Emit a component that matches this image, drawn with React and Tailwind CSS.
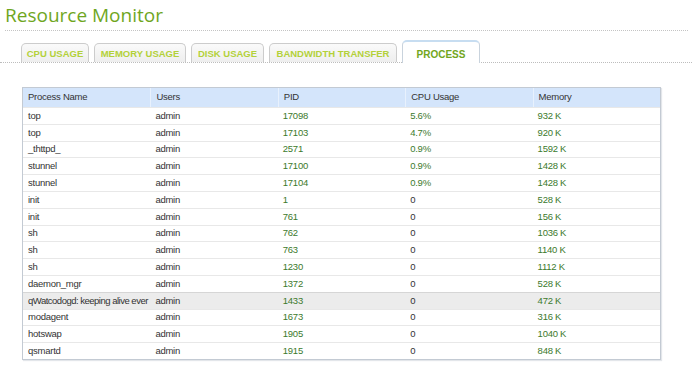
import React from 'react';

const tabs = [
  { label: 'CPU USAGE', w: 'w-[68px]' },
  { label: 'MEMORY USAGE', w: 'w-[92px]' },
  { label: 'DISK USAGE', w: 'w-[73px]' },
  { label: 'BANDWIDTH TRANSFER', w: 'w-[128px]' },
  { label: 'PROCESS', w: 'w-[78px]', active: true },
];

const rows = [
  ['top', '17098', '5.6%', '932 K'],
  ['top', '17103', '4.7%', '920 K'],
  ['_thttpd_', '2571', '0.9%', '1592 K'],
  ['stunnel', '17100', '0.9%', '1428 K'],
  ['stunnel', '17104', '0.9%', '1428 K'],
  ['init', '1', '0', '528 K'],
  ['init', '761', '0', '156 K'],
  ['sh', '762', '0', '1036 K'],
  ['sh', '763', '0', '1140 K'],
  ['sh', '1230', '0', '1112 K'],
  ['daemon_mgr', '1372', '0', '528 K'],
  ['qWatcodogd: keeping alive ever', '1433', '0', '472 K', true],
  ['modagent', '1673', '0', '316 K'],
  ['hotswap', '1905', '0', '1040 K'],
  ['qsmartd', '1915', '0', '848 K'],
];

const headers = ['Process Name', 'Users', 'PID', 'CPU Usage', 'Memory'];

export default function App() {
  return (
    <div className="w-[692px] h-[384px] bg-white overflow-hidden font-['Liberation_Sans',Arial,sans-serif]">
      {/* Title */}
      <div className="pl-[5px] pr-[4px] pt-[3px]">
        <h1 className="text-[19px] leading-[24px] text-[#6fa61e] font-['Open_Sans',sans-serif] pb-[3px] border-b border-dotted border-[#c4c4c4]">
          Resource Monitor
        </h1>
      </div>

      {/* Tabs */}
      <div className="mt-[9px] flex items-end gap-[5px] pl-[21px] border-b border-dotted border-[#bdbdbd]">
        {tabs.map((t) =>
          t.active ? (
            <div
              key={t.label}
              className={`${t.w} h-[23px] -mb-px pt-[3px] bg-white border border-b-0 border-[#c9d3dd] border-t-2 border-t-[#c7ddf1] rounded-t-[5px] flex items-center justify-center text-[10px] font-bold text-[#72a620]`}
            >
              {t.label}
            </div>
          ) : (
            <div
              key={t.label}
              className={`${t.w} h-[19px] pt-[2px] bg-gradient-to-b from-[#fafafa] to-[#eeeeee] border border-b-0 border-[#cccccc] rounded-t-[5px] flex items-center justify-center text-[9.5px] font-bold text-[#b3d13a]`}
            >
              {t.label}
            </div>
          )
        )}
      </div>

      {/* Table */}
      <div className="ml-[22px] mt-[24px] w-[639px] border border-[#c3cad3] shadow-[1px_1px_1px_#e3e6ea] text-[9.5px] tracking-[-0.25px] text-[#333]">
        <div className="grid grid-cols-5 h-[19px] bg-[#d4e5fb] items-center">
          {headers.map((h, i) => (
            <div key={h} className={`pl-[5px] h-full flex items-center ${i > 0 ? 'border-l border-[#e8f1fd]' : ''}`}>
              {h}
            </div>
          ))}
        </div>
        {rows.map((r, i) => (
          <div
            key={i}
            className={`grid grid-cols-5 h-[16.8px] items-center border-t ${
              r[4] ? 'bg-[#ececec] border-[#d6d6d6]' : 'border-[#e8e8e8]'
            }`}
          >
            <div className={`pl-[5px] whitespace-nowrap overflow-hidden ${r[4] ? 'tracking-[-0.5px]' : ''}`}>{r[0]}</div>
            <div className="pl-[5px]">admin</div>
            <div className="pl-[5px] text-[#3c7a2c]">{r[1]}</div>
            <div className={`pl-[5px] ${r[2] === '0' ? 'text-[#333]' : 'text-[#3c7a2c]'}`}>{r[2]}</div>
            <div className="pl-[5px] text-[#3c7a2c]">{r[3]}</div>
          </div>
        ))}
      </div>
    </div>
  );
}
